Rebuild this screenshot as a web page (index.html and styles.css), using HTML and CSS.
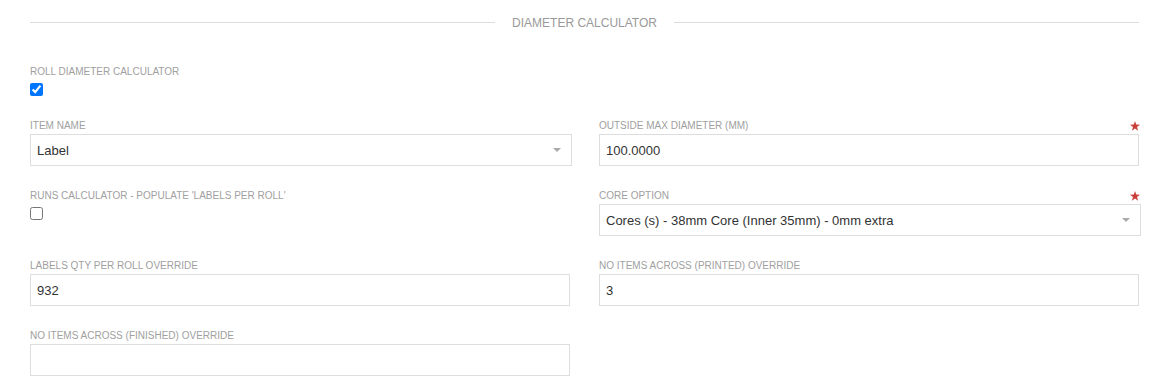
FILE: index.html
```html
<!DOCTYPE html>
<html lang="en">

<head>
    <meta charset="UTF-8">
    <meta name="viewport" content="width=device-width, initial-scale=1.0">
    <title>Diameter Calculator</title>
    <link rel="stylesheet" href="styles.css">
</head>

<body>
    <div class="page">
        <div class="section-title"><span>DIAMETER CALCULATOR</span></div>

        <div class="field toggle-row">
            <label class="field-label" for="rollCalc">ROLL DIAMETER CALCULATOR</label>
            <input type="checkbox" id="rollCalc" class="checkbox" checked>
        </div>

        <div class="form-grid">
            <div class="field">
                <label class="field-label">ITEM NAME</label>
                <div class="select">
                    <span>Label</span>
                    <span class="caret"></span>
                </div>
            </div>
            <div class="field">
                <label class="field-label" for="maxDiameter">
                    OUTSIDE MAX DIAMETER (MM)
                    <svg class="required" viewBox="0 0 10 10" width="10" height="10">
                        <polygon points="5,0 6.2,3.6 10,3.7 7,6 8.1,9.7 5,7.5 1.9,9.7 3,6 0,3.7 3.8,3.6" />
                    </svg>
                </label>
                <input type="text" id="maxDiameter" class="text-input" value="100.0000">
            </div>

            <div class="field">
                <label class="field-label" for="runsCalc">RUNS CALCULATOR - POPULATE 'LABELS PER ROLL'</label>
                <input type="checkbox" id="runsCalc" class="checkbox">
            </div>
            <div class="field">
                <label class="field-label">
                    CORE OPTION
                    <svg class="required" viewBox="0 0 10 10" width="10" height="10">
                        <polygon points="5,0 6.2,3.6 10,3.7 7,6 8.1,9.7 5,7.5 1.9,9.7 3,6 0,3.7 3.8,3.6" />
                    </svg>
                </label>
                <div class="select">
                    <span>Cores (s) - 38mm Core (Inner 35mm) - 0mm extra</span>
                    <span class="caret"></span>
                </div>
            </div>

            <div class="field">
                <label class="field-label" for="labelsQty">LABELS QTY PER ROLL OVERRIDE</label>
                <input type="text" id="labelsQty" class="text-input" value="932">
            </div>
            <div class="field">
                <label class="field-label" for="acrossPrinted">NO ITEMS ACROSS (PRINTED) OVERRIDE</label>
                <input type="text" id="acrossPrinted" class="text-input" value="3">
            </div>

            <div class="field">
                <label class="field-label" for="acrossFinished">NO ITEMS ACROSS (FINISHED) OVERRIDE</label>
                <input type="text" id="acrossFinished" class="text-input" value="">
            </div>
        </div>
    </div>
</body>

</html>
```

FILE: styles.css
```css
body {
    margin: 0;
    font-family: "Liberation Sans", Arial, sans-serif;
    background-color: #fff;
}

.page {
    padding: 13px 27px 0 30px;
}

.section-title {
    display: flex;
    align-items: center;
    gap: 17px;
    height: 19px;
    margin-right: 2px;
    font-size: 12px;
    color: #999;
}

.section-title::before,
.section-title::after {
    content: "";
    flex: 1;
    border-top: 1px solid #ddd;
}

.toggle-row {
    margin: 33px 0 23px;
}

.form-grid {
    display: grid;
    grid-template-columns: 542px 542px;
    column-gap: 27px;
    row-gap: 23px;
}

.field-label {
    display: flex;
    justify-content: space-between;
    align-items: center;
    font-size: 10px;
    line-height: 14px;
    margin-bottom: 1px;
    color: #a0a0a0;
}

.required {
    fill: #c9403a;
    margin-right: 1px;
}

.checkbox {
    display: block;
    width: 13px;
    height: 13px;
    margin: 4px 0 0;
}

.text-input {
    display: block;
    box-sizing: border-box;
    width: 540px;
    height: 32px;
    padding: 0 6px;
    border: 1px solid #ddd;
    font-family: inherit;
    font-size: 13px;
    color: #333;
    outline: none;
}

.select {
    display: flex;
    align-items: center;
    justify-content: space-between;
    box-sizing: border-box;
    height: 32px;
    padding: 0 10px 0 6px;
    border: 1px solid #ddd;
    font-size: 13px;
    color: #333;
    cursor: pointer;
}

.caret {
    border-left: 4px solid transparent;
    border-right: 4px solid transparent;
    border-top: 4px solid #aaa;
}
```
